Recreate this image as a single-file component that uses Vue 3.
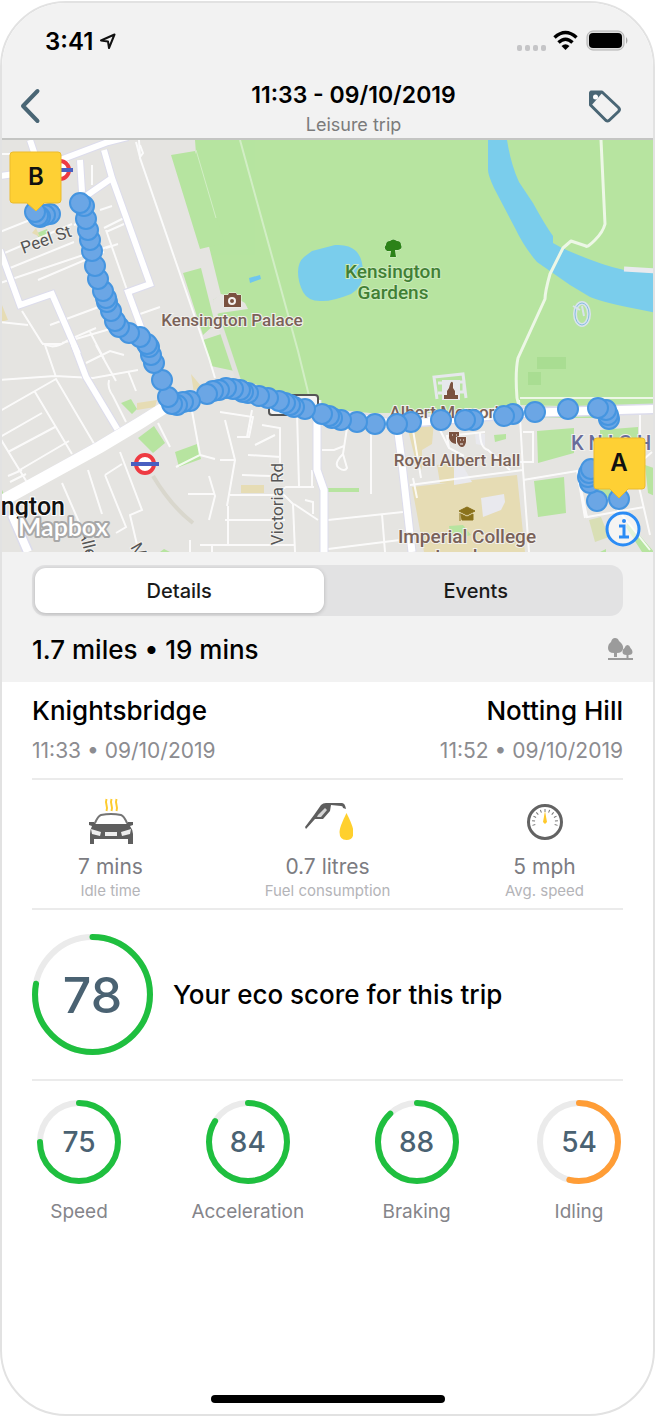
<script setup>
import { ref } from 'vue'

const tab = ref('details')

const route = [
  [619, 499], [597, 501], [590, 483], [588, 477], [589, 473], [591, 469], [610, 450],
  [609, 419], [608, 415], [606, 410], [598, 408], [568, 409], [535, 412], [513, 414],
  [504, 416], [473, 420], [465, 420], [441, 420], [411, 422], [397, 424],
  [375, 424], [357, 422], [341, 420], [332, 418], [329, 416], [322, 414],
  [305, 409], [294, 407], [290, 405], [285, 403], [279, 401], [268, 398], [259, 396],
  [248, 393], [243, 392], [240, 390], [233, 389], [226, 388], [219, 390], [213, 391],
  [207, 394], [190, 401], [183, 402], [177, 405], [172, 404], [168, 397],
  [162, 380], [154, 363], [151, 355], [149, 347], [147, 344], [140, 337],
  [129, 333], [119, 327], [115, 321], [111, 311], [107, 302], [106, 298],
  [103, 291], [98, 279], [95, 266], [92, 251], [90, 240], [88, 230],
  [86, 219], [84, 206], [80, 203],
  [50, 214], [45, 215], [40, 217], [38, 216], [35, 212]
]

const minorRoads = [
  'M0 154h28M0 232l60-24M0 255l72-31M10 268l64-26M0 283l110-37',
  'M38 280l66-28M50 325l46-17q8-3 12-8M100 210l12-4M104 228l20-10M106 248l12-4',
  'M0 322l28 3M22 311l20 32q12 8 26-3l28-12M90 332l14 27M62 343l48-14',
  'M62 344h-20M86 363l24-12 14 4M96 345l20 36M45 345l11 32M0 380l55-4 38 2 45-8',
  'M0 411l56-32 40 68M35 392l37 62M0 437l42-24M8 452l47-25M18 471l51-30M0 438l28 46',
  'M60 469l74-46 28-14M62 483l20 46M88 470l14 44M105 475l21 52-10 6M105 475l17-11M120 452l22 58-12 5 8 34',
  'M109 380q-2 8 4 16l13 26M128 371l8 20M8 476l14-6M10 482l16-8',
  'M192 411l8 44-24 12M200 455l15 4M158 423l12 24',
  'M106 232l18-8M106 230l21 60M140 314l20-7M74 225l8-3M68 155v20M92 165v20',
  'M188 494h26M209 476l6 20-6 24M200 545h30M212 545v7M190 540v12',
  'M220 412l33 5-4 20h-12M225 420l10 40-8 46M220 460h14M230 495h50M225 520h60M225 545h70M228 546v-40',
  'M252 410l-5 27M262 425l18 3v50M255 445l20-10M248 455l33 2M242 475l30 1',
  'M297 412l2 74M281 490l5-3h28M281 492l12 12 2 48M294 504l24 16M305 500l8 2v12M312 470v16',
  'M322 450h12l10-4M347 428l-4 26q-10 10-4 14t8 0l-4-14M371 425v69M328 520l75-8M382 514l3 38M328 549l80-10',
  'M413 430l8 48M410 485l60-8 53-7M440 430l9 18 15 8M449 448l-2-12 38-4M519 400l4 70 6 82M523 480l54-9',
  'M523 432h10v30h-13M577 470l10 47 57-10M577 470l8 48M634 465l16 70M610 500l40 50',
  'M480 432q0 16 8 18l22 20M413 478l4 20M640 405v40M636 466l16-14'
]

const mainRoads = [
  'M0 176l28-4 80-30 20-5M30 140l10 30M80 160l2 32M104 150l8 28-26 18M112 178l38 106-22 8 14 38',
  'M0 250l20 55 32-11 26 60',
  'M74 345l12 32 36 60'
]

const stats = [
  { icon: 'car', value: '7 mins', label: 'Idle time' },
  { icon: 'fuel', value: '0.7 litres', label: 'Fuel consumption' },
  { icon: 'gauge', value: '5 mph', label: 'Avg. speed' }
]

const scores = [
  { label: 'Speed', value: 75, tone: 'good' },
  { label: 'Acceleration', value: 84, tone: 'good' },
  { label: 'Braking', value: 88, tone: 'good' },
  { label: 'Idling', value: 54, tone: 'fair' }
]

const ticks = [-105, -84, -63, -42, -21, 0, 21, 42, 63, 84, 105]
</script>

<template>
  <main class="phone">
    <header class="top">
      <div class="status">
        <span class="time">3:41</span>
        <svg class="locate" viewBox="0 0 18 18" width="18" height="18">
          <path d="M2 8.5 15.500 2.500 10 16 9 9.500Z" fill="none" stroke="#111" stroke-width="2" stroke-linejoin="round" />
        </svg>
        <span class="spacer"></span>
        <svg viewBox="0 0 112 24" width="112" height="24">
          <g fill="#c5c5c7">
            <rect x="0" y="16" width="5" height="6" rx="2" /><rect x="8" y="16" width="5" height="6" rx="2" />
            <rect x="16" y="16" width="5" height="6" rx="2" /><rect x="24" y="16" width="5" height="6" rx="2" />
          </g>
          <g fill="none" stroke="#000" stroke-width="3.500">
            <path d="M37.500 8.500Q48.500-1.500 59.500 8.500" /><path d="M41.500 13.500Q48.500 7 55.500 13.500" />
          </g>
          <path d="M44.500 17Q48.500 13.500 52.500 17L48.500 21Z" />
          <rect x="70" y="2" width="37" height="19" rx="6" fill="#ddd" stroke="#b0b0b0" stroke-width="1" />
          <rect x="72" y="4" width="33" height="15" rx="4" />
          <path d="M109 8q3 3.500 0 7Z" fill="#aaa" />
        </svg>
      </div>
      <div class="nav">
        <button class="icon-btn" aria-label="Back">
          <svg viewBox="0 0 22 36" width="22" height="36">
            <path d="M18.500 3 4 18 18.500 33" fill="none" stroke="#4a6675" stroke-width="4" stroke-linecap="round" stroke-linejoin="round" />
          </svg>
        </button>
        <div class="heading">
          <h1>11:33 - 09/10/2019</h1>
          <p>Leisure trip</p>
        </div>
        <button class="icon-btn" aria-label="Tag trip">
          <svg viewBox="0 0 36 36" width="36" height="36">
            <path d="M4 4h11L31.500 19.500q2 2 0 4L22 32.500q-1.500 1-3 0L3.500 17V5Z" fill="none" stroke="#4a6675" stroke-width="3" stroke-linejoin="round" />
            <path d="M4 4h12L4 18Z" fill="#4a6675" />
            <circle cx="8.500" cy="9" r="2.500" fill="#fff" />
          </svg>
        </button>
      </div>
    </header>

    <section class="map" aria-label="Trip map">
      <svg class="canvas" viewBox="2 140 651 412" preserveAspectRatio="xMidYMid slice">
        <rect x="0" y="140" width="657" height="412" fill="#e5e4e1" />
        <g fill="#b7e4a0">
          <path d="M195 140H657V408L519 405 440 413H370L320 408 238 378 213 300 221 295 200 210Z" />
          <path d="M171 155l24-4 30 92-25 6ZM183 273l18-5 14 56-12 11Z" />
          <path d="M203 340l18-6 18 38-28-6ZM138 438l16-12 11 17-12 10ZM175 452l22-8 4 15-22 8Z" />
          <path d="M121 403l10-4 6 10-5 5ZM328 488h31v4h-31ZM0 485l6 14H0ZM37 233l10-4 3 6-12 2Z" />
          <path d="M537 431l37-3v25l-36 10ZM534 481l30-4 2 36-28 4ZM494 435l12-1v5l-11 3ZM600 430l38-3v20l-38 4ZM645 465l12 4v28l-9-4ZM628 522l26 30h-12l-16-25ZM590 480h35v18h-35ZM525 418h80v-10l-80-2Z" />
        </g>
        <g fill="#a9dd92"><path d="M537 357h29v12h-29ZM528 372h13v13h-13Z" /></g>
        <g fill="#e6dcb4">
          <path d="M412 487l105-12 8 77H424ZM408 430l26-8-2 22-10 6v20l-6-8ZM241 485h23v8h-23ZM137 403l20-3-2 7-18 3ZM191 374l10 12 12-5 1 8-20 4ZM437 465l16-2 3 20h-16ZM0 300l8 20-8 2ZM36 228l4 9-8-4Z" />
          <path d="M589 520l12-3 8 20-14 5Z" fill="#d9dfb5" />
        </g>
        <g fill="#b7e4a0"><path d="M449 526l14-1 8 10-20 6ZM160 552l4-3 6 3ZM600 552l6-3v3Z" /></g>
        <path d="M213 300l8-6 14 3 10 6 3 6-28 4-6 2Z" fill="#e5e4e1" />
        <g fill="none" stroke="#e2e1de" stroke-width="5"><path d="M220 325l20 60" /></g>
        <path d="M454 463l8 1 10 18-18 3ZM481 498l23-4 1 8-4 8-18 7ZM475 434h10v12l-9-2Z" fill="#e9e9ee" />
        <path d="M153 476q18 30 40 47" fill="none" stroke="#d9d7cd" stroke-width="4" />

        <g fill="none" stroke="#fff" stroke-width="2" opacity="0.85">
          <path v-for="d in minorRoads" :key="d" :d="d" />
          <path d="M139 140l1 18 69 200 6 20" />
          <path d="M136 142l4 15 3-4-3-8" />
        </g>
        <g fill="none" stroke="#dcdcec" stroke-width="8">
          <path v-for="d in mainRoads" :key="d" :d="d" />
          <path d="M317 400v70l7 20v62M397 425l4 30 11 97" stroke-width="9" />
        </g>
        <g fill="none" stroke="#fff" stroke-width="6">
          <path v-for="d in mainRoads" :key="d" :d="d" />
          <path d="M317 400v70l7 20v62M397 425l4 30 11 97" stroke-width="7" />
        </g>
        <path d="M0 502L100 446 140 422 175 401 215 390 320 412 395 424 520 413 655 409M10 510l18 42" fill="none" stroke="#dcdcec" stroke-width="11" />
        <path d="M0 502L40 480 100 447 140 423 175 401" fill="none" stroke="#fff" stroke-width="12" />
        <path d="M175 401L215 390 320 412 395 424 520 413 655 409M12 515l16 37" fill="none" stroke="#fff" stroke-width="8" />

        <g fill="none" stroke="#fff" stroke-linejoin="round">
          <path d="M240 140l58 211 12 49" stroke="#d2eec5" stroke-width="2" />
          <path d="M196 150l20 68" stroke="#d2eec5" stroke-width="1" />
        </g>
        <path d="M488 140H507Q511 165 519 182L533 203Q545 225 553 236V243L562 248Q600 265 624 270L657 273V313L637 309Q605 303 590 297L570 285 537 262Q524 247 515 228L494 188Q488 175 488 170Z" fill="#7acdec" />
        <path d="M624 269l32 2" stroke="#e9eaee" stroke-width="5" />
        <path d="M601 140l4 84q-2 8-10 16t-9 6l-15-5-8 7-13 26q-5 18-5 25L518 358q-3 14-1 40l3 12" fill="none" stroke="#edf7e6" stroke-width="3" stroke-linejoin="round" />
        <path d="M520 398h137" stroke="#edf7e6" stroke-width="2" />
        <path d="M312 251l23-6q14-1 21 6t7 22q0 14-12 21-20 8-31 7-12 0-17-9-5-10-5-20t6-15Z" fill="#7acdec" />
        <path d="M249 278l11-3 1 4-11 4Z" fill="#6fc6ee" />
        <ellipse cx="582" cy="314" rx="7" ry="11" fill="none" stroke="#d8e3ec" stroke-width="4" />
        <ellipse cx="582" cy="314" rx="7" ry="11" fill="none" stroke="#86bde0" stroke-width="1" />
        <path d="M573 306l7 4M582 306l2 10" fill="none" stroke="#d8e3ec" stroke-width="2" />
        <path d="M437 399l-3-22 29-3 3 24M438 383h8v10h-8M456 382h8v10h-8" fill="none" stroke="#e6e8ec" stroke-width="3" />
        <path d="M442 380h18v20h-18Z" fill="#e6e8ec" />
        <rect x="269" y="395" width="49" height="20" rx="3" fill="#f4f4f4" stroke="#555" stroke-width="2" />

        <g class="label brown">
          <text x="232" y="326">Kensington Palace</text>
          <text x="451" y="418">Albert Memorial</text>
          <text x="457" y="466">Royal Albert Hall</text>
          <text class="large" x="467" y="543">Imperial College</text>
          <text class="large" x="467" y="563">London</text>
        </g>
        <g class="label green">
          <text class="large" x="393" y="278">Kensington</text>
          <text class="large" x="393" y="299">Gardens</text>
        </g>
        <text class="label district" x="571" y="450">K N I G H</text>
        <text class="label street" transform="translate(48 245) rotate(-20)">Peel St</text>
        <text class="label street" transform="translate(283 504) rotate(-90)">Victoria Rd</text>
        <text class="label street from-start" transform="translate(79 531) rotate(76)">Allen</text>
        <text class="label street from-start" transform="translate(130 547) rotate(60)">Mar</text>
        <text class="town" x="65" y="515">Kensington</text>
        <text class="brand" x="18" y="536">Mapbox</text>

        <g fill="#7a5240" stroke="#f4f2f0" stroke-width="1" paint-order="stroke">
          <path d="M224 295h4l1-2h7l1 2h4v12h-17Z" />
          <path d="M449 388q2-9 4-5v5l2 3v4h3v4h-14v-4h3v-4l2-3Z" />
          <path d="M449 432h10v4l-3 1v7q-6-1-7-6ZM457 437h9v5q-1 5-4 5t-5-5Z" />
        </g>
        <circle cx="232" cy="301" r="3" fill="none" stroke="#f4f2f0" stroke-width="2" />
        <path d="M452 435h1M456 435h1M460 440h1M463 440h1M460 444h3" stroke="#f4f2f0" stroke-width="1" />
        <path d="M459 511l8-4 8 4-8 4ZM461 514l6 3 6-3v6h-11ZM460 513v8" fill="#8a721c" stroke="#8a721c" stroke-width="1" />
        <path d="M390 257l1-6h-4q-4-3-1-6 0-4 4-4 3-3 7 0 4 0 4 4 2 4-3 5h-3l1 7Z" fill="#2c8218" stroke="#d9f0cd" stroke-width="1" paint-order="stroke" />
        <g>
          <circle cx="145" cy="464" r="9" fill="#fff" stroke="#ee3a42" stroke-width="4" />
          <path d="M131 464h28" stroke="#4a5fc0" stroke-width="4" />
          <circle cx="60" cy="170" r="9" fill="#fff" stroke="#ee3a42" stroke-width="4" />
          <path d="M46 170h27" stroke="#4a5fc0" stroke-width="4" />
        </g>

        <g fill="#6ba6e5" stroke="#4595e0" stroke-width="2">
          <circle v-for="(p, i) in route" :key="i" :cx="p[0]" :cy="p[1]" r="10" />
        </g>

        <g class="pin">
          <path d="M13 152h45q3 0 3 3v45q0 3-3 3H44l-8 8-9-8H13q-3 0-3-3v-45q0-3 3-3Z" />
          <text x="36" y="185">B</text>
          <path d="M597 438h45q3 0 3 3v45q0 3-3 3h-14l-9 9-9-9h-13q-3 0-3-3v-45q0-3 3-3Z" />
          <text x="619" y="471">A</text>
        </g>
      </svg>
      <button class="info" aria-label="Map information">
        <svg viewBox="0 0 36 36" width="36" height="36">
          <circle cx="18" cy="18" r="16" fill="#fff" fill-opacity="0.6" stroke="#2b8cf5" stroke-width="3" />
          <path d="M14 15h5v11M14 26h10" fill="none" stroke="#2b8cf5" stroke-width="3" />
          <circle cx="19" cy="10" r="2" fill="#2b8cf5" />
        </svg>
      </button>
    </section>

    <section class="summary">
      <div class="tabs" role="tablist">
        <button role="tab" :aria-selected="tab === 'details'" :class="{ on: tab === 'details' }" @click="tab = 'details'">Details</button>
        <button role="tab" :aria-selected="tab === 'events'" :class="{ on: tab === 'events' }" @click="tab = 'events'">Events</button>
      </div>
      <div class="totals">
        <strong>1.7 miles • 19 mins</strong>
        <svg viewBox="0 0 26 24" width="26" height="24" fill="#9b9b9b">
          <path d="M8 1q3 0 4 3 5 4 4 8-1 4-6 4v4H7v-4q-6 0-6-5 0-4 3-6 1-4 4-4Z" />
          <path d="M20.500 8q2 0 3 3 2 2 2 4 0 3-4 3v3h-2v-3q-4 0-4-3t2-4q1-3 3-3Z" />
          <path d="M1 21h25v2H1Z" />
        </svg>
      </div>
    </section>

    <section class="places">
      <div>
        <h2>Knightsbridge</h2>
        <p>11:33 • 09/10/2019</p>
      </div>
      <div class="end">
        <h2>Notting Hill</h2>
        <p>11:52 • 09/10/2019</p>
      </div>
    </section>

    <hr>

    <section class="stats">
      <div v-for="s in stats" :key="s.label" class="stat">
        <svg v-if="s.icon === 'car'" viewBox="0 0 50 50" width="50" height="50">
          <path d="M20.500 1q-1 3 0 6 1 3 0 6M25.500 1q-1 3 0 6 1 3 0 6M30.500 1q-1 3 0 6 1 3 0 6" fill="none" stroke="#fdcb2e" stroke-width="2" />
          <path d="M9 25q3-7 6-8 10-2 20 0 3 1 6 8" fill="none" stroke="#757575" stroke-width="2" />
          <path d="M3 24h5l2 2h30l2-2h5v3l-3 1q3 4 3 8v10h-5v-5H8v5H4V36q0-4 2-8l-3-1Z" fill="#5e5e5e" />
          <path d="M5 31l10 3-1 4-8-2ZM45 31l-10 3 1 4 8-2ZM19 34h12v4H19Z" fill="#eee" />
        </svg>
        <svg v-else-if="s.icon === 'fuel'" viewBox="0 0 50 50" width="50" height="50">
          <path d="M2 29L11 17 18 7q2-2 5-2h16q3 0 4 6l-3-1q0-2-2-2l-10-1-1 6-7 8H12l-9 10Z" fill="#5e5e5e" />
          <path d="M15 17l7-7 2 2-6 7h-4Z" fill="#d5d5d5" />
          <path d="M43.500 15q7 14 7 19 0 8-7 8t-7-8q0-5 7-19Z" fill="#ffd02e" />
        </svg>
        <svg v-else viewBox="0 0 50 50" width="50" height="50">
          <circle cx="25" cy="24" r="16.500" fill="#fff" stroke="#636363" stroke-width="3" />
          <path v-for="t in ticks" :key="t" d="M25 11v3" :transform="`rotate(${t} 25 24)`" stroke="#777" stroke-width="1" />
          <path d="M25 13l2 11-2 2-2-2Z" fill="#ffc92b" />
        </svg>
        <span class="value">{{ s.value }}</span>
        <span class="caption">{{ s.label }}</span>
      </div>
    </section>

    <hr>

    <section class="eco">
      <div class="ring big good">
        <svg viewBox="0 0 120 120">
          <circle class="track" cx="60" cy="60" r="57" />
          <circle class="bar" cx="60" cy="60" r="57" pathLength="100" stroke-dasharray="78 100" />
        </svg>
        <span>78</span>
      </div>
      <h2>Your eco score for this trip</h2>
    </section>

    <hr>

    <section class="scores">
      <div v-for="s in scores" :key="s.label" class="score">
        <div class="ring" :class="s.tone">
          <svg viewBox="0 0 84 84">
            <circle class="track" cx="42" cy="42" r="39" />
            <circle class="bar" cx="42" cy="42" r="39" pathLength="100" :stroke-dasharray="`${s.value} 100`" />
          </svg>
          <span>{{ s.value }}</span>
        </div>
        <p>{{ s.label }}</p>
      </div>
    </section>

    <div class="home"></div>
  </main>
</template>

<style>
body { margin: 0; background: #fff; }
</style>

<style scoped>
.phone {
  box-sizing: border-box;
  display: flex;
  flex-direction: column;
  min-height: calc(100vh - 1px);
  margin: 1px 2px 0 0;
  border: 2px solid #e2e2e2;
  border-radius: 66px;
  overflow: hidden;
  background: #fff;
  color: #000;
  font-family: Inter, "Liberation Sans", sans-serif;
}
h1, h2, p { margin: 0; font-weight: 500; }
button { padding: 0; border: 0; background: none; font: inherit; color: inherit; cursor: pointer; }
svg { display: block; flex: none; }
.top { background: #f2f2f2; border-bottom: 2px solid #c4c5c3; }
.status { display: flex; align-items: center; gap: 6px; height: 76px; padding: 0 24px 0 43px; }
.time { font-size: 24px; font-weight: 600; }
.spacer { flex: 1; }
.nav { display: grid; grid-template-columns: 60px 1fr 80px; align-items: center; height: 59px; }
.icon-btn { display: grid; place-items: center; padding-bottom: 6px; }
.icon-btn:first-child { padding-right: 4px; }
.icon-btn:last-child { padding-right: 16px; }
.heading { text-align: center; padding-left: 72px; }
.heading h1 { font-size: 23px; line-height: 32px; font-weight: 600; }
.heading p { font-size: 18px; line-height: 28px; font-weight: 400; color: #7b7b7b; }
.map { position: relative; }
.canvas { width: 100%; height: auto; }
.label { font: 500 17px Roboto, "Noto Sans", sans-serif; text-anchor: middle; stroke: #f2f1ee; stroke-width: 2px; paint-order: stroke; }
.large { font-size: 19px; }
.brown { fill: #7a6258; }
.green { fill: #417f35; stroke: #cdebbd; }
.district { text-anchor: start; font-size: 20px; fill: #686c9b; }
.street { fill: #555; font-weight: 400; }
.from-start { text-anchor: start; }
.town { font: 500 25px Roboto, "Noto Sans", sans-serif; text-anchor: end; fill: #111; stroke: #fff; stroke-width: 2px; paint-order: stroke; }
.brand { font: 600 25px Lato, sans-serif; fill: #fff; stroke: #a8a8a8; stroke-width: 4px; stroke-linejoin: round; paint-order: stroke; }
.pin path { fill: #fed034; stroke: #ebbb2c; stroke-width: 1px; }
.pin text { font: 600 24px Inter, sans-serif; text-anchor: middle; fill: #111; }
.info { position: absolute; right: 12px; bottom: 5px; }
.summary { background: #f2f2f2; padding: 13px 30px 0; }
.tabs { display: grid; grid-template-columns: 1fr 1fr; gap: 8px; padding: 3px; border-radius: 13px; background: #e2e2e3; }
.tabs button { height: 45px; border-radius: 11px; font-size: 20px; font-weight: 500; color: #1a1a1a; }
.tabs .on { background: #fff; box-shadow: 0 1px 4px rgba(0, 0, 0, 0.2); }
.totals { display: flex; align-items: center; justify-content: space-between; height: 66px; margin-right: -10px; }
.totals strong { font-size: 26px; font-weight: 500; }
.places { display: flex; justify-content: space-between; padding: 10px 30px 8px; }
.places h2 { font-size: 26px; line-height: 38px; }
.places p { margin-top: 2px; font-size: 21px; line-height: 38px; font-weight: 400; color: #8c8c90; }
.end { text-align: right; }
hr { align-self: stretch; height: 2px; margin: 0 30px; border: 0; background: #ebebeb; }
.stats { display: grid; grid-template-columns: repeat(3, 1fr); padding: 18px 0 7px; }
.stat { display: flex; flex-direction: column; align-items: center; }
.value { margin-top: 5px; font-size: 21px; line-height: 28px; color: #7c7c82; }
.caption { font-size: 15px; line-height: 20px; color: #b4b4b8; }
.eco { display: flex; align-items: center; gap: 20px; padding: 24px 30px; }
.eco h2 { font-size: 26px; }
.ring { position: relative; display: grid; place-items: center; width: 84px; height: 84px; color: #4a6272; font-size: 28px; font-weight: 500; }
.ring svg { position: absolute; inset: 0; width: 100%; height: 100%; transform: rotate(-90deg); overflow: visible; }
.ring circle { fill: none; stroke-width: 6px; }
.ring .track { stroke: #ebebeb; }
.ring .bar { stroke-linecap: round; }
.good .bar { stroke: #1fbf3f; }
.fair .bar { stroke: #ff9d36; }
.ring.big { width: 121px; height: 121px; font-size: 50px; }
.scores { display: flex; justify-content: space-between; padding: 19px 24px 0 27px; }
.score { display: flex; flex-direction: column; align-items: center; min-width: 100px; }
.score p { margin-top: 14px; font-size: 19px; line-height: 28px; font-weight: 400; color: #85858a; }
.home { width: 234px; height: 8px; margin: auto auto 11px; border-radius: 4px; background: #000; }
</style>
